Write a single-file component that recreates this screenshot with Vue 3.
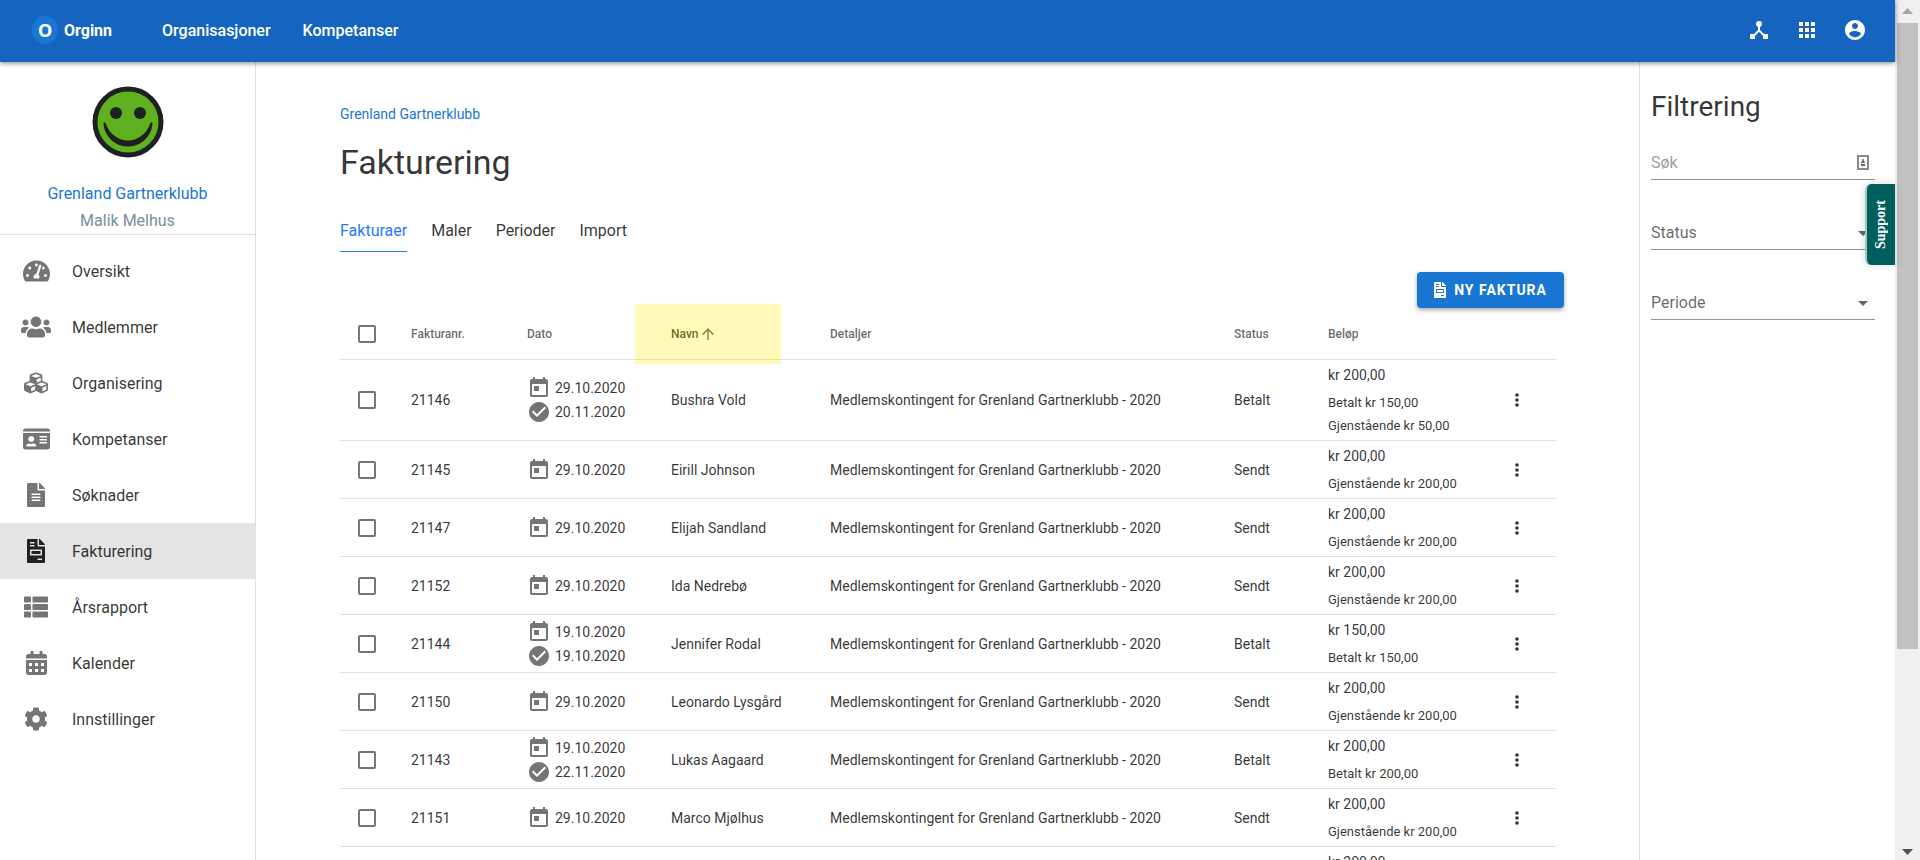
<template>
  <div class="window">
    <div class="app">
      <header class="app-bar">
        <a class="brand" href="#">
          <span class="brand-mark">O</span>
          <span>Orginn</span>
        </a>
        <nav class="top-nav">
          <a href="#">Organisasjoner</a>
          <a href="#">Kompetanser</a>
        </nav>
        <div class="top-actions">
          <button v-for="action in topActions" :key="action.label" type="button" :aria-label="action.label">
            <svg viewBox="0 0 24 24"><path :d="action.path" /></svg>
          </button>
        </div>
      </header>

      <div class="layout">
        <aside class="sidebar">
          <div class="profile">
            <svg class="avatar" viewBox="0 0 72 72">
              <circle cx="36" cy="36" r="33" fill="#60b01f" stroke="#1e2022" stroke-width="5" />
              <circle cx="24" cy="27" r="6" fill="#1e2022" />
              <circle cx="48" cy="27" r="6" fill="#1e2022" />
              <path
                d="M11.500 37c1-1.500 2-.5 2.500 1C17 47 26 54.500 36 54.500S55 47 58 38c.5-1.500 1.500-2.500 2.500-1C60 50 49 60.500 36 60.500S12 50 11.500 37z"
                fill="#1e2022"
              />
            </svg>
            <a class="profile-org" href="#">Grenland Gartnerklubb</a>
            <span class="profile-user">Malik Melhus</span>
          </div>
          <nav class="menu">
            <a
              v-for="item in menu"
              :key="item.name"
              href="#"
              :class="{ active: item.name === activeMenu }"
              @click.prevent="activeMenu = item.name"
            >
              <span class="menu-icon">
                <svg :viewBox="`0 0 ${item.width} 512`"><path :d="item.path" /></svg>
              </span>
              {{ item.name }}
            </a>
          </nav>
        </aside>

        <main class="content">
          <a class="breadcrumb" href="#">Grenland Gartnerklubb</a>
          <h1>Fakturering</h1>
          <nav class="tabs">
            <a
              v-for="tab in tabs"
              :key="tab"
              href="#"
              :class="{ active: tab === activeTab }"
              @click.prevent="activeTab = tab"
            >{{ tab }}</a>
          </nav>

          <div class="toolbar">
            <button class="new-invoice" type="button">
              <svg viewBox="0 0 384 512"><path :d="invoiceIcon" /></svg>
              NY FAKTURA
            </button>
          </div>

          <table class="invoices">
            <colgroup>
              <col class="col-check" />
              <col class="col-number" />
              <col class="col-date" />
              <col class="col-name" />
              <col />
              <col class="col-status" />
              <col class="col-amount" />
              <col class="col-menu" />
            </colgroup>
            <thead>
              <tr>
                <th><input type="checkbox" aria-label="Velg alle" /></th>
                <th>Fakturanr.</th>
                <th>Dato</th>
                <th class="sorted">
                  <span class="sort-label">
                    Navn
                    <svg viewBox="0 0 24 24">
                      <path d="M13 20h-2V8l-5.500 5.500-1.420-1.420L12 4.160l7.920 7.920-1.420 1.420L13 8v12z" />
                    </svg>
                  </span>
                </th>
                <th>Detaljer</th>
                <th>Status</th>
                <th>Beløp</th>
                <th></th>
              </tr>
            </thead>
            <tbody>
              <tr v-for="(invoice, index) in invoices" :key="index">
                <td><input type="checkbox" :aria-label="`Velg ${invoice.number}`" /></td>
                <td>{{ invoice.number }}</td>
                <td>
                  <div v-if="invoice.date" class="date">
                    <svg viewBox="0 0 24 24"><path :d="calendarIcon" /></svg>
                    {{ invoice.date }}
                  </div>
                  <div v-if="invoice.paidDate" class="date">
                    <svg viewBox="0 0 24 24"><path :d="checkIcon" /></svg>
                    {{ invoice.paidDate }}
                  </div>
                </td>
                <td>{{ invoice.name }}</td>
                <td>{{ invoice.details }}</td>
                <td>{{ invoice.status }}</td>
                <td class="amount">
                  <div class="total">{{ invoice.amount }}</div>
                  <div v-for="note in invoice.notes" :key="note" class="note">{{ note }}</div>
                </td>
                <td class="row-menu">
                  <button type="button" aria-label="Meny">
                    <svg viewBox="0 0 24 24">
                      <circle cx="12" cy="6" r="2.200" />
                      <circle cx="12" cy="12" r="2.200" />
                      <circle cx="12" cy="18" r="2.200" />
                    </svg>
                  </button>
                </td>
              </tr>
            </tbody>
          </table>
        </main>

        <aside class="filters">
          <h2>Filtrering</h2>
          <div class="field">
            <input v-model="search" type="text" placeholder="Søk" aria-label="Søk" />
            <svg class="contact" viewBox="0 0 12 16">
              <rect x="1" y="1" width="10" height="13" fill="none" stroke="#8a8a8a" stroke-width="2" />
              <circle cx="6" cy="5" r="1" />
              <path d="M4 8c0-3 4-3 4 0zM4 9h4v2H4z" />
            </svg>
          </div>
          <div v-for="filter in filters" :key="filter" class="field">
            <select :aria-label="filter">
              <option>{{ filter }}</option>
            </select>
            <svg class="caret" viewBox="0 0 24 24"><path d="M7 10l5 5 5-5z" /></svg>
          </div>
        </aside>
      </div>

      <button class="support" type="button"><span>Support</span></button>
    </div>

    <div class="scrollbar">
      <svg class="up" viewBox="0 0 11 6"><path d="M0 6L5.500 0 11 6z" /></svg>
      <div class="track"><div class="thumb"></div></div>
      <svg class="down" viewBox="0 0 11 6"><path d="M0 0l5.500 6L11 0z" /></svg>
    </div>
  </div>
</template>

<script setup>
import { ref } from 'vue';

const activeMenu = ref('Fakturering');
const activeTab = ref('Fakturaer');
const search = ref('');

const tabs = ['Fakturaer', 'Maler', 'Perioder', 'Import'];
const filters = ['Status', 'Periode'];

const calendarIcon =
  'M7 10h5v5H7zM19 19H5V8h14M19 3h-1V1h-2v2H8V1H6v2H5c-1.110 0-2 .9-2 2v14a2 2 0 0 0 2 2h14a2 2 0 0 0 2-2V5a2 2 0 0 0-2-2z';
const checkIcon =
  'M12 2C6.500 2 2 6.500 2 12s4.500 10 10 10 10-4.500 10-10S17.500 2 12 2zm-2 15l-5-5 1.410-1.410L10 14.170l7.590-7.590L19 8l-9 9z';
const invoiceIcon =
  'M288 256H96v64h192v-64zm89-151L279.1 7c-4.500-4.500-10.600-7-17-7H256v128h128v-6.100c0-6.300-2.500-12.400-7-16.900zm-153 31V0H24C10.700 0 0 10.700 0 24v464c0 13.300 10.700 24 24 24h336c13.300 0 24-10.700 24-24V160H248c-13.200 0-24-10.800-24-24zM64 72c0-4.420 3.580-8 8-8h80c4.420 0 8 3.580 8 8v16c0 4.420-3.580 8-8 8H72c-4.420 0-8-3.580-8-8V72zm0 64c0-4.420 3.580-8 8-8h80c4.420 0 8 3.580 8 8v16c0 4.420-3.580 8-8 8H72c-4.420 0-8-3.580-8-8v-16zm256 304c0 4.420-3.580 8-8 8h-80c-4.420 0-8-3.580-8-8v-16c0-4.420 3.580-8 8-8h80c4.420 0 8 3.580 8 8v16zm0-200v96c0 8.840-7.160 16-16 16H80c-8.840 0-16-7.160-16-16v-96c0-8.840 7.160-16 16-16h224c8.840 0 16 7.160 16 16z';

const topActions = [
  {
    label: 'Struktur',
    path: 'M17 16l-4-4V8.820C14.160 8.400 15 7.300 15 6a3 3 0 0 0-6 0c0 1.300.84 2.400 2 2.820V12l-4 4H3v5h5v-3.050l4-4.200 4 4.200V21h5v-5h-4z',
  },
  {
    label: 'Apper',
    path: 'M4 4h4v4H4zM10 4h4v4h-4zM16 4h4v4h-4zM4 10h4v4H4zM10 10h4v4h-4zM16 10h4v4h-4zM4 16h4v4H4zM10 16h4v4h-4zM16 16h4v4h-4z',
  },
  {
    label: 'Konto',
    path: 'M12 2C6.480 2 2 6.480 2 12s4.480 10 10 10 10-4.480 10-10S17.520 2 12 2zm0 3c1.660 0 3 1.340 3 3s-1.340 3-3 3-3-1.340-3-3 1.340-3 3-3zm0 14.200c-2.500 0-4.710-1.280-6-3.220.03-1.990 4-3.080 6-3.080 1.990 0 5.970 1.090 6 3.080-1.290 1.940-3.500 3.220-6 3.220z',
  },
];

const menu = [
  {
    name: 'Oversikt',
    width: 576,
    path: 'M288 32C128.940 32 0 160.940 0 320c0 52.800 14.250 102.260 39.060 144.800 5.610 9.620 16.300 15.200 27.440 15.200h443c11.140 0 21.830-5.580 27.440-15.200C561.750 422.260 576 372.800 576 320c0-159.060-128.940-288-288-288zm0 64c14.710 0 26.580 10.130 30.320 23.650-1.110 2.260-2.640 4.230-3.450 6.670l-9.220 27.670c-5.130 3.490-10.970 6.010-17.640 6.010-17.670 0-32-14.330-32-32S270.330 96 288 96zM96 384c-17.670 0-32-14.330-32-32s14.330-32 32-32 32 14.330 32 32-14.330 32-32 32zm48-160c-17.670 0-32-14.330-32-32s14.330-32 32-32 32 14.330 32 32-14.330 32-32 32zm246.770-72.410l-61.330 184C343.130 347.330 352 364.540 352 384c0 11.720-3.380 22.550-8.880 32H232.880c-5.500-9.450-8.880-20.280-8.880-32 0-33.940 26.500-61.430 59.900-63.590l61.340-184.010c4.170-12.560 17.730-19.450 30.360-15.170 12.570 4.190 19.350 17.790 15.170 30.360zm14.660 57.200l15.520-46.550c3.470-1.290 7.130-2.230 11.050-2.230 17.670 0 32 14.330 32 32s-14.330 32-32 32c-11.380-.01-20.890-6.280-26.570-15.220zM480 384c-17.670 0-32-14.330-32-32s14.330-32 32-32 32 14.330 32 32-14.330 32-32 32z',
  },
  {
    name: 'Medlemmer',
    width: 640,
    path: 'M96 224c35.300 0 64-28.700 64-64s-28.700-64-64-64-64 28.700-64 64 28.700 64 64 64zm448 0c35.300 0 64-28.700 64-64s-28.700-64-64-64-64 28.700-64 64 28.700 64 64 64zm32 32h-64c-17.600 0-33.500 7.100-45.100 18.600 40.300 22.100 68.900 62 75.100 109.400h66c17.700 0 32-14.300 32-32v-32c0-35.300-28.700-64-64-64zm-256 0c61.900 0 112-50.100 112-112S381.900 32 320 32 208 82.100 208 144s50.100 112 112 112zm76.800 32h-8.300c-20.800 10-43.900 16-68.500 16s-47.600-6-68.500-16h-8.300C179.600 288 128 339.600 128 403.200V432c0 26.500 21.500 48 48 48h288c26.500 0 48-21.500 48-48v-28.800c0-63.600-51.600-115.200-115.200-115.200zm-223.700-13.400C161.500 263.100 145.600 256 128 256H64c-35.300 0-64 28.700-64 64v32c0 17.700 14.300 32 32 32h65.900c6.300-47.400 34.900-87.300 75.200-109.400z',
  },
  {
    name: 'Organisering',
    width: 512,
    path: 'M488.600 250.200L392 214V105.500c0-15-9.300-28.400-23.400-33.700l-100-37.500c-8.100-3.100-17.100-3.100-25.300 0l-100 37.500c-14.100 5.300-23.400 18.700-23.400 33.700V214l-96.600 36.200C9.300 255.500 0 268.900 0 283.900V394c0 13.600 7.700 26.100 19.900 32.200l100 50c10.100 5.100 22.100 5.100 32.200 0l103.900-52 103.900 52c10.100 5.100 22.100 5.100 32.200 0l100-50c12.200-6.100 19.900-18.600 19.900-32.200V283.900c0-15-9.300-28.400-23.400-33.700zM358 214.800l-85 31.900v-68.200l85-37v73.300zM154 104.100l102-38.200 102 38.200v.6l-102 41.400-102-41.400v-.6zm84 291.100l-85 42.500v-79.100l85-38.800v75.400zm0-112l-102 41.400-102-41.400v-.6l102-38.200 102 38.200v.6zm240 112l-85 42.500v-79.100l85-38.800v75.400zm0-112l-102 41.400-102-41.400v-.6l102-38.200 102 38.200v.6z',
  },
  {
    name: 'Kompetanser',
    width: 576,
    path: 'M528 32H48C21.500 32 0 53.500 0 80v16h576V80c0-26.500-21.500-48-48-48zM0 432c0 26.500 21.500 48 48 48h480c26.500 0 48-21.500 48-48V128H0v304zm352-232c0-4.400 3.600-8 8-8h144c4.400 0 8 3.600 8 8v16c0 4.400-3.600 8-8 8H360c-4.400 0-8-3.600-8-8v-16zm0 64c0-4.400 3.600-8 8-8h144c4.400 0 8 3.600 8 8v16c0 4.400-3.600 8-8 8H360c-4.400 0-8-3.600-8-8v-16zm0 64c0-4.400 3.600-8 8-8h144c4.400 0 8 3.600 8 8v16c0 4.400-3.600 8-8 8H360c-4.400 0-8-3.600-8-8v-16zM176 192c35.300 0 64 28.700 64 64s-28.700 64-64 64-64-28.700-64-64 28.700-64 64-64zM67.100 396.200C75.500 370.500 99.600 352 128 352h8.200c12.300 5.100 25.700 8 39.800 8s27.600-2.900 39.800-8h8.200c28.400 0 52.500 18.500 60.900 44.200 3.200 9.900-5.200 19.800-15.600 19.800H82.700c-10.400 0-18.800-10-15.600-19.800z',
  },
  {
    name: 'Søknader',
    width: 384,
    path: 'M224 136V0H24C10.700 0 0 10.700 0 24v464c0 13.300 10.700 24 24 24h336c13.300 0 24-10.700 24-24V160H248c-13.200 0-24-10.800-24-24zm64 236c0 6.600-5.400 12-12 12H108c-6.600 0-12-5.400-12-12v-8c0-6.600 5.400-12 12-12h168c6.600 0 12 5.400 12 12v8zm0-64c0 6.600-5.400 12-12 12H108c-6.600 0-12-5.400-12-12v-8c0-6.600 5.400-12 12-12h168c6.600 0 12 5.400 12 12v8zm0-72v8c0 6.600-5.400 12-12 12H108c-6.600 0-12-5.400-12-12v-8c0-6.600 5.400-12 12-12h168c6.600 0 12 5.400 12 12zm96-114.100v6.100H256V0h6.100c6.400 0 12.500 2.500 17 7l97.900 98c4.500 4.500 7 10.600 7 16.900z',
  },
  { name: 'Fakturering', width: 384, path: invoiceIcon },
  {
    name: 'Årsrapport',
    width: 512,
    path: 'M149 216v80c0 13-11 24-24 24H24c-13 0-24-11-24-24v-80c0-13 11-24 24-24h101c13 0 24 11 24 24zM0 376v80c0 13 11 24 24 24h101c13 0 24-11 24-24v-80c0-13-11-24-24-24H24c-13 0-24 11-24 24zM125 32H24C11 32 0 43 0 56v80c0 13 11 24 24 24h101c13 0 24-11 24-24V56c0-13-11-24-24-24zm80 448h283c13 0 24-11 24-24v-80c0-13-11-24-24-24H205c-13 0-24 11-24 24v80c0 13 11 24 24 24zM181 56v80c0 13 11 24 24 24h283c13 0 24-11 24-24V56c0-13-11-24-24-24H205c-13 0-24 11-24 24zm24 264h283c13 0 24-11 24-24v-80c0-13-11-24-24-24H205c-13 0-24 11-24 24v80c0 13 11 24 24 24z',
  },
  {
    name: 'Kalender',
    width: 448,
    path: 'M0 464c0 26.500 21.500 48 48 48h352c26.500 0 48-21.500 48-48V192H0v272zM320 256h64v64h-64zm0 128h64v64h-64zM192 256h64v64h-64zm0 128h64v64h-64zM64 256h64v64H64zm0 128h64v64H64zM400 64h-48V16c0-8.800-7.200-16-16-16h-32c-8.800 0-16 7.200-16 16v48H160V16c0-8.800-7.200-16-16-16h-32c-8.800 0-16 7.200-16 16v48H48C21.500 64 0 85.500 0 112v48h448v-48c0-26.500-21.500-48-48-48z',
  },
  {
    name: 'Innstillinger',
    width: 512,
    path: 'M487.400 315.700l-42.600-24.600c4.300-23.200 4.300-47 0-70.200l42.600-24.600c4.900-2.800 7.100-8.600 5.500-14-11.100-35.600-30-67.800-54.700-94.600-3.800-4.100-10-5.100-14.800-2.300L380.800 110c-17.900-15.400-38.500-27.300-60.800-35.100V25.800c0-5.600-3.900-10.500-9.400-11.700-36.700-8.200-74.300-7.800-109.200 0-5.500 1.200-9.400 6.100-9.400 11.700V75c-22.200 7.900-42.800 19.800-60.800 35.100L88.700 85.500c-4.900-2.800-11-1.900-14.800 2.300-24.700 26.700-43.600 58.900-54.700 94.600-1.700 5.400.6 11.200 5.500 14L67.300 221c-4.300 23.200-4.300 47 0 70.200l-42.600 24.600c-4.900 2.800-7.100 8.600-5.500 14 11.100 35.600 30 67.800 54.700 94.600 3.800 4.100 10 5.100 14.800 2.300l42.600-24.600c17.900 15.400 38.500 27.300 60.800 35.100v49.200c0 5.600 3.900 10.500 9.400 11.700 36.700 8.200 74.300 7.800 109.200 0 5.500-1.200 9.400-6.100 9.400-11.700v-49.200c22.200-7.900 42.800-19.800 60.800-35.100l42.600 24.600c4.900 2.800 11 1.900 14.800-2.300 24.700-26.700 43.600-58.900 54.700-94.600 1.500-5.500-.7-11.300-5.600-14.100zM256 336c-44.100 0-80-35.900-80-80s35.900-80 80-80 80 35.900 80 80-35.900 80-80 80z',
  },
];

const details = 'Medlemskontingent for Grenland Gartnerklubb - 2020';

const invoices = [
  {
    number: '21146',
    date: '29.10.2020',
    paidDate: '20.11.2020',
    name: 'Bushra Vold',
    details,
    status: 'Betalt',
    amount: 'kr 200,00',
    notes: ['Betalt kr 150,00', 'Gjenstående kr 50,00'],
  },
  {
    number: '21145',
    date: '29.10.2020',
    name: 'Eirill Johnson',
    details,
    status: 'Sendt',
    amount: 'kr 200,00',
    notes: ['Gjenstående kr 200,00'],
  },
  {
    number: '21147',
    date: '29.10.2020',
    name: 'Elijah Sandland',
    details,
    status: 'Sendt',
    amount: 'kr 200,00',
    notes: ['Gjenstående kr 200,00'],
  },
  {
    number: '21152',
    date: '29.10.2020',
    name: 'Ida Nedrebø',
    details,
    status: 'Sendt',
    amount: 'kr 200,00',
    notes: ['Gjenstående kr 200,00'],
  },
  {
    number: '21144',
    date: '19.10.2020',
    paidDate: '19.10.2020',
    name: 'Jennifer Rodal',
    details,
    status: 'Betalt',
    amount: 'kr 150,00',
    notes: ['Betalt kr 150,00'],
  },
  {
    number: '21150',
    date: '29.10.2020',
    name: 'Leonardo Lysgård',
    details,
    status: 'Sendt',
    amount: 'kr 200,00',
    notes: ['Gjenstående kr 200,00'],
  },
  {
    number: '21143',
    date: '19.10.2020',
    paidDate: '22.11.2020',
    name: 'Lukas Aagaard',
    details,
    status: 'Betalt',
    amount: 'kr 200,00',
    notes: ['Betalt kr 200,00'],
  },
  {
    number: '21151',
    date: '29.10.2020',
    name: 'Marco Mjølhus',
    details,
    status: 'Sendt',
    amount: 'kr 200,00',
    notes: ['Gjenstående kr 200,00'],
  },
  { amount: 'kr 200,00' },
];
</script>

<style>
body {
  margin: 0;
  overflow: hidden;
}
</style>

<style scoped>
.window {
  display: flex;
  height: 100vh;
  overflow: hidden;
  background: #fff;
  color: rgba(0, 0, 0, 0.8);
  font-family: Roboto, 'Liberation Sans', sans-serif;
  font-size: 16px;
}
.window * {
  box-sizing: border-box;
}
a {
  color: inherit;
  text-decoration: none;
}
button,
input,
select {
  font: inherit;
  color: inherit;
  border: 0;
  margin: 0;
  padding: 0;
  background: none;
}
button {
  cursor: pointer;
}
svg {
  display: block;
  fill: currentColor;
}
.app {
  position: relative;
  display: flex;
  flex: 1;
  flex-direction: column;
  min-width: 0;
}

/* Toppmeny */
.app-bar {
  display: flex;
  flex: none;
  align-items: center;
  height: 62px;
  padding: 0 16px 2px 32px;
  background: #1565c0;
  color: #fff;
  font-weight: 500;
  box-shadow: 0 1px 5px rgba(0, 0, 0, 0.5);
  z-index: 1;
}
.brand {
  display: flex;
  align-items: center;
  gap: 6px;
  font-weight: 700;
}
.brand-mark {
  display: flex;
  align-items: center;
  justify-content: center;
  width: 26px;
  height: 28px;
  border-radius: 50%;
  background: #1976d2;
  font-family: 'Noto Sans', sans-serif;
  font-size: 18px;
}
.top-nav {
  display: flex;
  gap: 32px;
  margin-left: 50px;
}
.top-actions {
  display: flex;
  margin-left: auto;
}
.top-actions button {
  display: flex;
  align-items: center;
  justify-content: center;
  width: 48px;
  height: 48px;
}
.top-actions svg {
  width: 24px;
  height: 24px;
}

.layout {
  display: flex;
  flex: 1;
  min-height: 0;
}

/* Sidemeny */
.sidebar {
  flex: none;
  width: 256px;
  border-right: 1px solid #e0e0e0;
}
.profile {
  display: flex;
  flex-direction: column;
  align-items: center;
  padding-top: 24px;
  border-bottom: 1px solid #e0e0e0;
  line-height: 28px;
}
.avatar {
  width: 72px;
  height: 72px;
  margin-bottom: 22px;
}
.profile-org {
  color: #1976d2;
}
.profile-user {
  color: #78909c;
  line-height: 26px;
}
.menu {
  padding: 8px 0;
}
.menu a {
  display: flex;
  align-items: center;
  gap: 16px;
  height: 56px;
  padding: 0 16px;
}
.menu a.active {
  background: #e4e4e4;
}
.menu-icon {
  display: flex;
  justify-content: center;
  width: 40px;
  color: #757575;
}
.active .menu-icon {
  color: #212121;
}
.menu-icon svg {
  height: 24px;
}

/* Innhold */
.content {
  flex: 1;
  min-width: 0;
  padding: 40px 75px 0 84px;
  overflow: hidden;
}
.breadcrumb {
  display: block;
  color: #1976d2;
  font-size: 14px;
  line-height: 24px;
}
h1 {
  margin: 16px 0 0;
  font-size: 34px;
  line-height: 40px;
  font-weight: 400;
}
.tabs {
  display: flex;
  gap: 24px;
  margin-top: 29px;
}
.tabs a {
  padding: 8px 0;
  border-bottom: 1px solid transparent;
  line-height: 24px;
}
.tabs a.active {
  color: #2979ff;
  border-color: #2979ff;
}
.toolbar {
  display: flex;
  justify-content: flex-end;
  margin-top: 20px;
}
.new-invoice {
  display: flex;
  align-items: center;
  gap: 8px;
  height: 36px;
  padding: 0 17px;
  border-radius: 4px;
  background: #1976d2;
  color: #fff;
  font-size: 14px;
  font-weight: 700;
  letter-spacing: 1px;
  box-shadow: 0 2px 4px rgba(0, 0, 0, 0.35);
}
.new-invoice svg {
  width: 12px;
  height: 16px;
}

/* Fakturatabell */
.invoices {
  width: calc(100% - 8px);
  margin-top: -4px;
  border-collapse: separate;
  border-spacing: 0;
  table-layout: fixed;
  font-size: 14px;
}
.col-check {
  width: 55px;
}
.col-number {
  width: 116px;
}
.col-date {
  width: 144px;
}
.col-name {
  width: 159px;
}
.col-status {
  width: 94px;
}
.col-amount {
  width: 166px;
}
.col-menu {
  width: 78px;
}
th,
td {
  height: 58px;
  padding: 0 16px;
  border-bottom: 1px solid #e0e0e0;
  text-align: left;
  white-space: nowrap;
}
th {
  height: 56px;
  padding-top: 5px;
  color: rgba(0, 0, 0, 0.6);
  font-size: 12px;
  font-weight: 500;
}
input[type='checkbox'] {
  display: block;
  width: 18px;
  height: 18px;
  margin-left: 2px;
  border: 2px solid #757575;
  border-radius: 2px;
  appearance: none;
}
.sorted {
  position: relative;
  color: rgba(0, 0, 0, 0.8);
}
.sorted::after {
  content: '';
  position: absolute;
  top: 0;
  left: -20px;
  width: 146px;
  height: 60px;
  background: rgba(255, 238, 0, 0.27);
}
.sort-label {
  display: flex;
  align-items: center;
}
.sort-label svg {
  width: 18px;
  height: 18px;
  color: rgba(0, 0, 0, 0.6);
}
.date {
  display: flex;
  align-items: center;
  gap: 4px;
  height: 24px;
}
.date svg {
  width: 24px;
  height: 24px;
  color: #757575;
}
.amount {
  padding: 4px 16px 3px;
  vertical-align: top;
}
.total {
  margin-bottom: 5px;
  line-height: 22px;
}
.note {
  font-size: 13px;
  line-height: 23px;
}
.row-menu button {
  display: block;
  margin-left: 13px;
}
.row-menu svg {
  width: 20px;
  height: 20px;
}

/* Filtrering */
.filters {
  flex: none;
  width: 256px;
  padding: 25px 20px 0 11px;
  border-left: 1px solid #e0e0e0;
}
h2 {
  margin: 0 0 19px;
  font-size: 28px;
  line-height: 40px;
  font-weight: 400;
}
.field {
  display: flex;
  align-items: center;
  height: 34px;
  margin-bottom: 36px;
  border-bottom: 1px solid #949494;
  color: rgba(0, 0, 0, 0.6);
}
.field input,
.field select {
  flex: 1;
  min-width: 0;
  appearance: none;
  outline: none;
}
.field input::placeholder {
  color: #9e9e9e;
  opacity: 1;
}
.contact {
  width: 12px;
  height: 16px;
  margin-right: 6px;
}
.caret {
  width: 24px;
  height: 24px;
}

.support {
  position: absolute;
  top: 184px;
  right: 0;
  display: flex;
  align-items: center;
  justify-content: center;
  width: 30px;
  height: 81px;
  border-left: 2px solid #a5c8c6;
  border-radius: 6px 0 0 6px;
  background: #005f5c;
  color: #fff;
  font-family: 'Liberation Serif', serif;
  font-size: 14px;
  font-weight: 700;
  box-shadow: 0 0 8px rgba(0, 0, 0, 0.15);
  z-index: 2;
}
.support span {
  writing-mode: vertical-rl;
  transform: rotate(180deg);
}

/* Rullefelt */
.scrollbar {
  display: flex;
  flex: none;
  flex-direction: column;
  align-items: center;
  width: 25px;
  padding: 8px 0 5px;
  background: #f0f0f0;
}
.scrollbar svg {
  width: 11px;
  height: 6px;
}
.scrollbar .up {
  color: #a3a3a3;
}
.scrollbar .down {
  color: #505050;
}
.track {
  flex: 1;
  width: 21px;
  padding: 9px 0;
}
.thumb {
  height: 76.6%;
  background: #c1c1c1;
}
</style>
